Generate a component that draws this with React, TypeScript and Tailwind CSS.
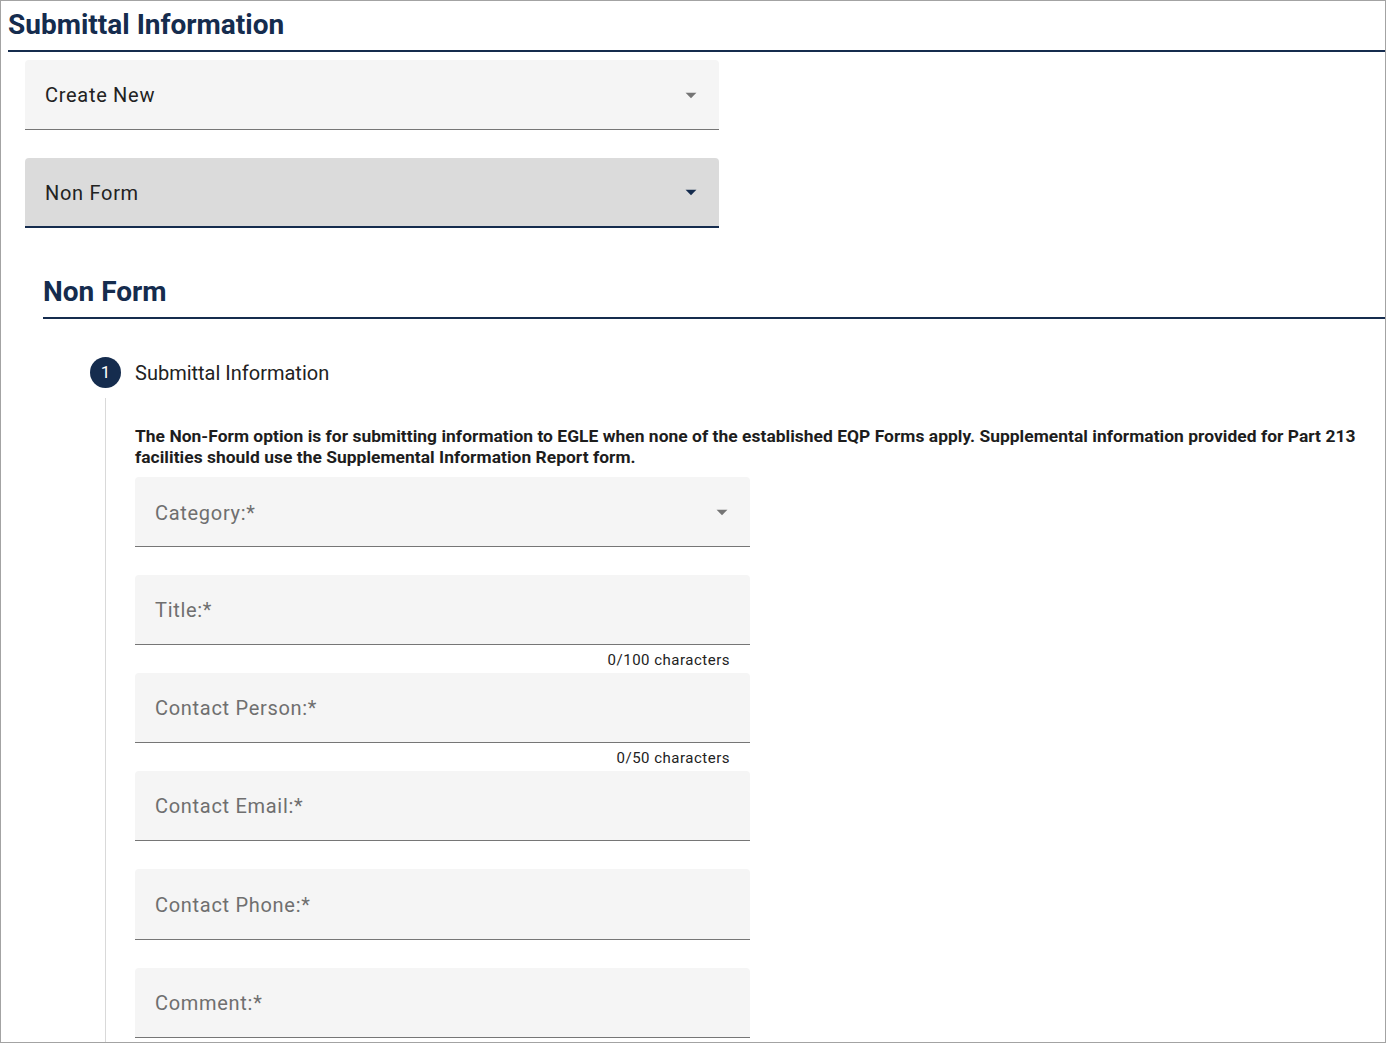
import React from "react";

const navy = "#152c4e";

function Arrow({ dark }: { dark?: boolean }) {
  return (
    <svg width="26" height="26" viewBox="0 0 24 24" className="shrink-0">
      <path d="M7 10l5 5 5-5z" fill={dark ? navy : "#757575"} />
    </svg>
  );
}

function SelectBox({
  label,
  active,
  placeholder,
}: {
  label: string;
  active?: boolean;
  placeholder?: boolean;
}) {
  return (
    <div
      className={
        active
          ? "flex h-[70px] items-center justify-between rounded-t bg-[#dbdbdb] border-b-2 border-[#152c4e] pl-5 pr-[15px]"
          : "flex h-[70px] items-center justify-between rounded-t bg-[#f5f5f5] border-b border-[#767676] pl-5 pr-[15px]"
      }
    >
      <span
        className={
          placeholder
            ? "pt-[2px] text-[20px] tracking-[0.7px] text-[#6f6f6f]"
            : "pt-[1px] text-[20px] tracking-[0.7px] text-[#222]"
        }
      >
        {label}
      </span>
      <Arrow dark={active} />
    </div>
  );
}

function TextField({ label, helper, tall }: { label: string; helper?: string; tall?: boolean }) {
  return (
    <div className="flex flex-col">
      <div
        className={
          tall
            ? "flex h-[71px] items-center rounded-t bg-[#f5f5f5] border-b border-[#767676] px-5"
            : "flex h-[70px] items-center rounded-t bg-[#f5f5f5] border-b border-[#767676] px-5"
        }
      >
        <span className="pt-[1px] text-[20px] tracking-[0.7px] text-[#6f6f6f]">{label}</span>
      </div>
      <div className="h-[28px] pr-5 text-right text-[15px] leading-[30px] tracking-[0.5px] text-[#222]">
        {helper}
      </div>
    </div>
  );
}

export default function App() {
  return (
    <div
      className="h-[1043px] w-[1386px] overflow-hidden border border-[#a3a3a3] bg-white"
      style={{ fontFamily: "Roboto, 'Liberation Sans', sans-serif" }}
    >
      <div className="pl-[7px]">
        <h1 className="pt-[5px] text-[28px] font-bold leading-[38px] text-[#152c4e]">
          Submittal Information
        </h1>
        <div className="mt-[6px] h-[2px] bg-[#152c4e]" />
      </div>

      <div className="mt-[8px] flex w-[718px] flex-col gap-[28px] pl-[24px]">
        <SelectBox label="Create New" />
        <SelectBox label="Non Form" active />
      </div>

      <div className="mt-[47px] pl-[42px]">
        <h2 className="text-[28px] font-bold leading-[34px] text-[#152c4e]">Non Form</h2>
        <div className="mt-[8px] h-[2px] bg-[#152c4e]" />
      </div>

      <div className="mt-[38px] pl-[89px]">
        <div className="flex items-center gap-[14px]">
          <div className="flex h-[31px] w-[31px] items-center justify-center rounded-full bg-[#152c4e] text-[17px] text-white">
            1
          </div>
          <span className="text-[20px] tracking-[0px] text-[#222]">Submittal Information</span>
        </div>
        <div className="ml-[15px] mt-[10px] flex border-l border-[#d9d9d9] pl-[29px]">
          <div className="flex flex-col">
            <p className="mt-[28px] w-[1240px] text-[17.4px] font-bold leading-[21px] tracking-[0.04px] text-[#1d1d1d]">
              The Non-Form option is for submitting information to EGLE when none of the established EQP Forms
              apply. Supplemental information provided for Part 213 facilities should use the Supplemental
              Information Report form.
            </p>
            <div className="mt-[9px] w-[615px]">
              <div className="mb-[28px]">
                <SelectBox label="Category:*" placeholder />
              </div>
              <TextField label="Title:*" helper="0/100 characters" />
              <TextField label="Contact Person:*" helper="0/50 characters" />
              <TextField label="Contact Email:*" />
              <TextField label="Contact Phone:*" tall />
              <TextField label="Comment:*" />
            </div>
          </div>
        </div>
      </div>
    </div>
  );
}
